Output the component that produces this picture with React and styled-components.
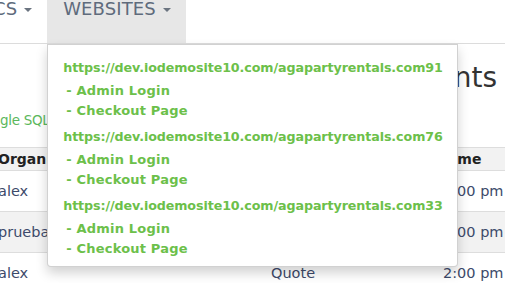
import { Fragment } from "react";
import styled, { createGlobalStyle } from "styled-components";

const GlobalStyle = createGlobalStyle`
  html, body {
    margin: 0;
    padding: 0;
    background: #fff;
    overflow: hidden;
  }
  body {
    font-family: "DejaVu Sans", "Open Sans", sans-serif;
    width: 505px;
    height: 283px;
  }
`;

const Page = styled.div`
  position: relative;
  width: 505px;
  height: 283px;
  overflow: hidden;
`;

const NavBar = styled.nav`
  display: flex;
  height: 43px;
  border-bottom: 1px solid #dcdcdc;
  background: #fff;
`;

const NavItem = styled.div`
  position: relative;
  display: flex;
  align-items: flex-start;
  gap: 7px;
  padding: 0 15px 0 16px;
  margin-left: ${(p) => p.$offset || "0"};
  background: ${(p) => (p.$open ? "#e7e7e7" : "transparent")};
  color: #5f6b7c;
  font-size: 18px;
  line-height: 18px;
  letter-spacing: 0.1px;
`;

const Caret = styled.span`
  width: 0;
  height: 0;
  margin-top: 8px;
  border-left: 4px solid transparent;
  border-right: 4px solid transparent;
  border-top: 4px solid #6b7480;
`;

const Dropdown = styled.div`
  position: absolute;
  top: 44px;
  left: 0;
  width: 411px;
  box-sizing: border-box;
  padding: 10px 0 4px;
  background: #fff;
  border: 1px solid rgba(0, 0, 0, 0.18);
  border-radius: 0 0 4px 4px;
  box-shadow: 0 6px 12px rgba(0, 0, 0, 0.18);
  z-index: 10;
  font-size: 12.7px;
  font-weight: 700;
  color: #6cc04a;
`;

const Site = styled.div`
  display: flex;
  flex-direction: column;
  padding-bottom: 3px;
`;

const SiteUrl = styled.a`
  display: block;
  padding: 4px 15px;
  line-height: 18px;
  color: inherit;
  text-decoration: none;
  letter-spacing: -0.1px;
`;

const SubLink = styled.a`
  display: block;
  padding: 0 18px;
  line-height: 20px;
  color: inherit;
  text-decoration: none;
  font-size: 13px;
  letter-spacing: 0.2px;
`;

const Content = styled.div`
  display: flex;
  flex-direction: column;
`;

const Heading = styled.h1`
  margin: 16px 8px 0 0;
  text-align: right;
  font-size: 28px;
  font-weight: 400;
  line-height: 36px;
  color: #333;
`;

const SqlToggle = styled.a`
  margin-top: 15px;
  font-size: 13.5px;
  line-height: 18px;
  letter-spacing: -0.3px;
  color: #5cb85c;
  text-decoration: none;
`;

const Table = styled.div`
  margin-top: 18px;
  display: grid;
  grid-template-columns: 265px 172px 1fr;
`;

const Cell = styled.div`
  padding: 0 6px;
  height: ${(p) => (p.$head ? "23px" : "41px")};
  display: flex;
  align-items: center;
  box-sizing: border-box;
  border-top: 1px solid #dddddd;
  background: ${(p) => (p.$shade ? "#f2f2f2" : "#fff")};
  font-size: ${(p) => (p.$head ? "14px" : "14.5px")};
  font-weight: ${(p) => (p.$head ? 600 : 400)};
  color: ${(p) => (p.$head ? "#222" : "#3d4a6a")};
  white-space: nowrap;
  padding-left: ${(p) => (p.$first ? "0" : "6px")};
  text-indent: ${(p) => (p.$first ? "-2px" : "0")};
`;

const sites = ["91", "76", "33"];

const rows = [
  { org: "alex", type: "Quote", time: "2:00 pm" },
  { org: "prueba", type: "Quote", time: "2:00 pm" },
  { org: "alex", type: "Quote", time: "2:00 pm" },
];

export default function App() {
  return (
    <Page>
      <GlobalStyle />
      <NavBar>
        <NavItem $offset="-23px">
          CS <Caret />
        </NavItem>
        <NavItem $open>
          WEBSITES <Caret />
          <Dropdown>
            {sites.map((n) => (
              <Site key={n}>
                <SiteUrl href="#">https://dev.iodemosite10.com/agapartyrentals.com{n}</SiteUrl>
                <SubLink href="#">- Admin Login</SubLink>
                <SubLink href="#">- Checkout Page</SubLink>
              </Site>
            ))}
          </Dropdown>
        </NavItem>
      </NavBar>
      <Content>
        <Heading>Events</Heading>
        <SqlToggle href="#">gle SQL Query</SqlToggle>
        <Table>
          <Cell $head $shade $first>Organization</Cell>
          <Cell $head $shade>Type</Cell>
          <Cell $head $shade>Time</Cell>
          {rows.map((r, i) => (
            <Fragment key={i}>
              <Cell $first $shade={i === 1}>{r.org}</Cell>
              <Cell $shade={i === 1}>{r.type}</Cell>
              <Cell $shade={i === 1}>{r.time}</Cell>
            </Fragment>
          ))}
        </Table>
      </Content>
    </Page>
  );
}
